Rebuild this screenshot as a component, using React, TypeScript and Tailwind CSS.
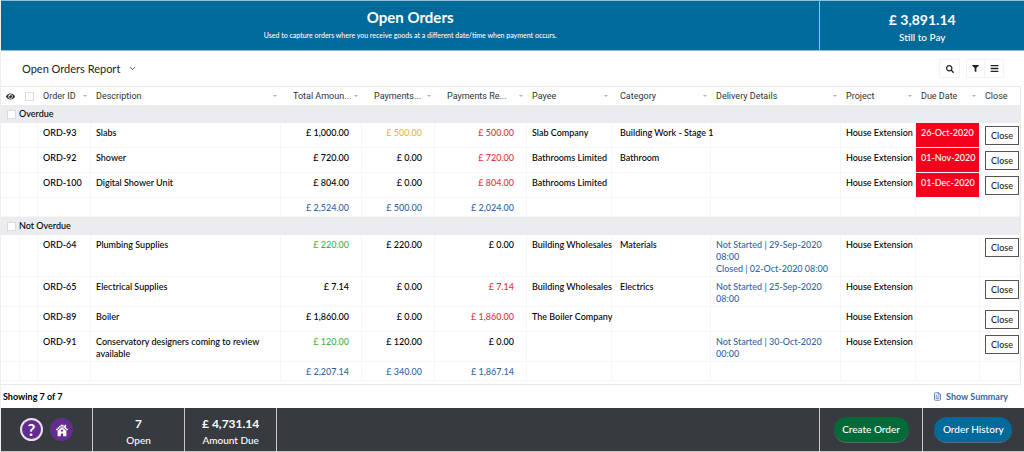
import React from 'react';
import { ChevronDown, FileText } from 'lucide-react';
import { FaBars, FaEye, FaFilter, FaSearch } from 'react-icons/fa';

type Tone = 'black' | 'green' | 'amber' | 'red';

interface Amount {
  value: string;
  tone?: Tone;
}

interface Order {
  id: string;
  description: string;
  total: Amount;
  paid: Amount;
  remaining: Amount;
  payee?: string;
  category?: string;
  delivery?: string[];
  project: string;
  due?: string;
}

interface OrderGroup {
  name: string;
  orders: Order[];
  totals: string[];
}

const groups: OrderGroup[] = [
  {
    name: 'Overdue',
    orders: [
      { id: 'ORD-93', description: 'Slabs', total: { value: '1,000.00' }, paid: { value: '500.00', tone: 'amber' }, remaining: { value: '500.00', tone: 'red' }, payee: 'Slab Company', category: 'Building Work - Stage 1', project: 'House Extension', due: '26-Oct-2020' },
      { id: 'ORD-92', description: 'Shower', total: { value: '720.00' }, paid: { value: '0.00' }, remaining: { value: '720.00', tone: 'red' }, payee: 'Bathrooms Limited', category: 'Bathroom', project: 'House Extension', due: '01-Nov-2020' },
      { id: 'ORD-100', description: 'Digital Shower Unit', total: { value: '804.00' }, paid: { value: '0.00' }, remaining: { value: '804.00', tone: 'red' }, payee: 'Bathrooms Limited', project: 'House Extension', due: '01-Dec-2020' },
    ],
    totals: ['2,524.00', '500.00', '2,024.00'],
  },
  {
    name: 'Not Overdue',
    orders: [
      { id: 'ORD-64', description: 'Plumbing Supplies', total: { value: '220.00', tone: 'green' }, paid: { value: '220.00' }, remaining: { value: '0.00' }, payee: 'Building Wholesales', category: 'Materials', delivery: ['Not Started | 29-Sep-2020 08:00', 'Closed | 02-Oct-2020 08:00'], project: 'House Extension' },
      { id: 'ORD-65', description: 'Electrical Supplies', total: { value: '7.14' }, paid: { value: '0.00' }, remaining: { value: '7.14', tone: 'red' }, payee: 'Building Wholesales', category: 'Electrics', delivery: ['Not Started | 25-Sep-2020 08:00'], project: 'House Extension' },
      { id: 'ORD-89', description: 'Boiler', total: { value: '1,860.00' }, paid: { value: '0.00' }, remaining: { value: '1,860.00', tone: 'red' }, payee: 'The Boiler Company', project: 'House Extension' },
      { id: 'ORD-91', description: 'Conservatory designers coming to review available', total: { value: '120.00', tone: 'green' }, paid: { value: '120.00' }, remaining: { value: '0.00' }, delivery: ['Not Started | 30-Oct-2020 00:00'], project: 'House Extension' },
    ],
    totals: ['2,207.14', '340.00', '1,867.14'],
  },
];

const columns = [
  { label: 'Order ID', width: 'w-[53px]', pad: 'pl-[5px]' },
  { label: 'Description', width: '', pad: 'pl-[5px]' },
  { label: 'Total Amoun...', width: 'w-[81px]', pad: 'pl-[12px]' },
  { label: 'Payments...', width: 'w-[73px]', pad: 'pl-[12px]' },
  { label: 'Payments Re...', width: 'w-[92px]', pad: 'pl-[12px]' },
  { label: 'Payee', width: 'w-[85px]', pad: 'pl-[5px]' },
  { label: 'Category', width: 'w-[99px]', pad: 'pl-[8px]' },
  { label: 'Delivery Details', width: 'w-[130px]', pad: 'pl-[5px]' },
  { label: 'Project', width: 'w-[75px]', pad: 'pl-[5px]' },
  { label: 'Due Date', width: 'w-[64px]', pad: 'pl-[5px]' },
];

const toneClass: Record<Tone, string> = {
  black: 'text-black',
  green: 'text-[#3fb54a]',
  amber: 'text-[#e8b93a]',
  red: 'text-[#e8353b]',
};

const base = 'border-r border-b border-[#f6f6f6] align-top';
const cell = `${base} pl-[5px] pt-[4px] pb-[1px]`;
const money = `${base} pr-[12px] pt-[4px] pb-[1px] text-right whitespace-nowrap`;

const CheckBox: React.FC<{ label: string }> = ({ label }) => (
  <input
    type="checkbox"
    aria-label={label}
    className="block size-[9px] shrink-0 appearance-none border border-[#dcdcdc] bg-white"
  />
);

const MoneyCell: React.FC<{ amount: Amount }> = ({ amount }) => (
  <td className={`${money} ${toneClass[amount.tone ?? 'black']}`}>£ {amount.value}</td>
);

const OrderRow: React.FC<{ order: Order }> = ({ order }) => (
  <tr>
    <td className={cell} />
    <td className={cell} />
    <td className={cell}>{order.id}</td>
    <td className={`${cell} pr-4`}>{order.description}</td>
    <MoneyCell amount={order.total} />
    <MoneyCell amount={order.paid} />
    <MoneyCell amount={order.remaining} />
    <td className={`${cell} whitespace-nowrap`}>{order.payee}</td>
    <td className={`${base} pt-[4px] pb-[1px] pl-[8px] whitespace-nowrap`}>{order.category}</td>
    <td className={`${cell} pr-1 text-[#3566a5]`}>
      {order.delivery?.map((line) => <div key={line}>{line}</div>)}
    </td>
    <td className={`${cell} whitespace-nowrap`}>{order.project}</td>
    <td className={`${cell} whitespace-nowrap ${order.due ? 'bg-[#f5001d] text-white' : ''}`}>{order.due}</td>
    <td className={`${base} pt-[3px] pb-[2px] pl-[5px]`}>
      <button type="button" className="block h-[19px] w-[34px] border border-[#555] bg-white text-center text-[#222]">
        Close
      </button>
    </td>
  </tr>
);

const GroupRows: React.FC<{ group: OrderGroup }> = ({ group }) => (
  <tbody>
    <tr>
      <th colSpan={13} scope="colgroup" className="h-[18px] bg-[#ebecef] p-0 pl-[6px] text-left font-medium">
        <div className="flex items-center gap-[3px]">
          <CheckBox label={`Select ${group.name}`} />
          {group.name}
        </div>
      </th>
    </tr>
    {group.orders.map((order) => (
      <OrderRow key={order.id} order={order} />
    ))}
    <tr className="h-[19px]">
      <td className={cell} />
      <td className={cell} />
      <td className={cell} />
      <td className={cell} />
      {group.totals.map((total) => (
        <td key={total} className={`${money} text-[#3566a5]`}>£ {total}</td>
      ))}
      <td className={cell} />
      <td className={cell} />
      <td className={cell} />
      <td className={cell} />
      <td className={cell} />
      <td className={cell} />
    </tr>
  </tbody>
);

const HomeIcon = () => (
  <svg viewBox="0 0 24 24" className="size-[14px]" aria-hidden="true">
    <path d="M2.500 12 12 3.500l9.500 8.500" fill="none" stroke="#fff" strokeWidth="3" strokeDasharray="2.600 .7" />
    <path d="M16.500 3h2.500v5h-2.500z" fill="#fff" />
    <path fillRule="evenodd" d="M12 7l7.500 6.500v9H14v-4.500h-4v4.500H4.500v-9zM10 11.500v3h4v-3z" fill="#fff" />
  </svg>
);

export default function App() {
  return (
    <div className="border-l border-[#eeeeee] bg-white font-['Lato',sans-serif] text-[9px] leading-[12px] font-medium text-black">
      <header className="flex h-[51px] border-t border-b border-[#8fc0d8] bg-[#006a9a] text-center text-white">
        <div className="flex flex-1 flex-col items-center pt-[7px]">
          <h1 className="text-[15px] leading-[18px] font-bold">Open Orders</h1>
          <p className="mt-[3px] text-[7px] leading-[12px]">
            Used to capture orders where you receive goods at a different date/time when payment occurs.
          </p>
        </div>
        <div className="w-1/5 border-l border-[#8fc0d8] pt-[10px]">
          <div className="text-[14px] leading-[18px] font-bold">£ 3,891.14</div>
          <div className="text-[10px] leading-[16px]">Still to Pay</div>
        </div>
      </header>

      <div className="flex h-[35px] items-center justify-between pr-5 pl-[21px]">
        <button type="button" className="flex items-center gap-2 text-[11px] font-normal text-[#222]">
          Open Orders Report
          <ChevronDown className="size-[9px]" />
        </button>
        <div className="flex gap-[6px] text-[#222]">
          <button type="button" aria-label="Search" className="flex h-[19px] w-[21px] items-center justify-center border border-[#f2f2f2]">
            <FaSearch className="size-[8px]" />
          </button>
          <div className="flex border border-[#f2f2f2]">
            <button type="button" aria-label="Filter" className="flex h-[17px] w-[18px] items-center justify-center border-r border-[#f2f2f2]">
              <FaFilter className="size-[7px]" />
            </button>
            <button type="button" aria-label="Menu" className="flex h-[17px] w-[18px] items-center justify-center">
              <FaBars className="size-[9px]" />
            </button>
          </div>
        </div>
      </div>

      <div className="mr-[3px] border-t border-r border-b border-[#e9e9e9] pb-[3px]">
        <table className="w-full table-fixed border-separate border-spacing-0">
          <thead>
            <tr className="h-[18px] font-['Roboto',sans-serif] text-[#333]">
              <th className="w-[19px] p-0 pl-[5px]">
                <FaEye className="size-[9px]" />
              </th>
              <th className="w-[18px] p-0 pl-[5px]">
                <CheckBox label="Select all" />
              </th>
              {columns.map((col) => (
                <th key={col.label} scope="col" className={`p-0 pr-1 font-normal ${col.width} ${col.pad}`}>
                  <div className="flex items-center justify-between whitespace-nowrap">
                    {col.label}
                    <span className="border-x-2 border-t-2 border-x-transparent border-t-[#b5b5b5]" />
                  </div>
                </th>
              ))}
              <th scope="col" className="w-[40px] p-0 pl-[5px] text-left font-normal">Close</th>
            </tr>
          </thead>
          {groups.map((group) => (
            <GroupRows key={group.name} group={group} />
          ))}
        </table>
      </div>

      <div className="flex h-[23px] items-center justify-between pr-4 pl-[2px] font-bold">
        <span>Showing 7 of 7</span>
        <a href="#summary" className="flex items-center gap-1 text-[#3566a5]">
          <FileText className="size-[9px]" />
          Show Summary
        </a>
      </div>

      <footer className="flex h-[44px] border-b border-[#c9c9c9] bg-[#373b3f] text-center text-white">
        <div className="flex w-[9%] items-center justify-center gap-[7px] border-r border-[#c9c9c9]">
          <button type="button" aria-label="Help" className="flex size-[23px] items-center justify-center rounded-full border-2 border-[#eadff2] bg-[#652c90] text-[17px] font-bold">
            ?
          </button>
          <a href="#home" aria-label="Home" className="flex size-[23px] items-center justify-center rounded-full bg-[#652c90]">
            <HomeIcon />
          </a>
        </div>
        <div className="w-[9%] border-r border-[#c9c9c9] pt-[7px]">
          <div className="text-[12px] leading-[18px] font-bold">7</div>
          <div className="text-[10px] leading-[14px]">Open</div>
        </div>
        <div className="w-[9%] border-r border-[#c9c9c9] pt-[7px]">
          <div className="text-[12px] leading-[18px] font-bold">£ 4,731.14</div>
          <div className="text-[10px] leading-[14px]">Amount Due</div>
        </div>
        <div className="flex-1" />
        <div className="flex w-[10%] items-center justify-center border-l border-[#c9c9c9]">
          <button type="button" className="h-[26px] w-[75px] rounded-full border-b border-[#5a6a60] bg-[#006b38] text-[10px]">
            Create Order
          </button>
        </div>
        <div className="flex w-[10%] items-center justify-center border-l border-[#c9c9c9]">
          <button type="button" className="h-[26px] w-[78px] rounded-full border-b border-[#5a6a75] bg-[#006a9a] text-[10px]">
            Order History
          </button>
        </div>
      </footer>
    </div>
  );
}
